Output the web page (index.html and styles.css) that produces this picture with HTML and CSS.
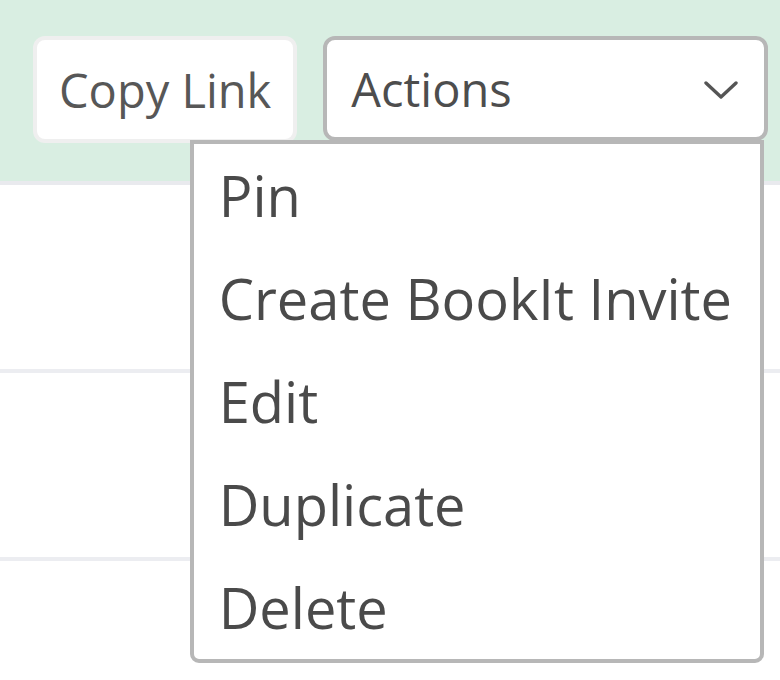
FILE: index.html
```html
<!DOCTYPE html>
<html lang="en">
<head>
    <meta charset="UTF-8">
    <meta name="viewport" content="width=device-width, initial-scale=1.0">
    <title>Event Actions</title>
    <link rel="stylesheet" href="styles.css">
</head>
<body>

    <!-- Toolbar with share + actions dropdown -->
    <header class="toolbar">
        <button class="btn copy-link">Copy Link</button>

        <div class="actions">
            <button class="btn actions-toggle">
                <span>Actions</span>
                <svg class="chevron" width="34" height="19" viewBox="0 0 34 19">
                    <path d="M2 2 L17 16 L32 2" fill="none" stroke="#555" stroke-width="3.4" stroke-linecap="round" stroke-linejoin="round"/>
                </svg>
            </button>

            <ul class="actions-menu">
                <li>Pin</li>
                <li>Create BookIt Invite</li>
                <li>Edit</li>
                <li>Duplicate</li>
                <li>Delete</li>
            </ul>
        </div>
    </header>

    <!-- List rows underneath -->
    <div class="rows">
        <div class="row"></div>
        <div class="row"></div>
        <div class="row last"></div>
    </div>

</body>
</html>
```

FILE: styles.css
```css
body {
    margin: 0;
    background: #fff;
    font-family: "Open Sans", "Liberation Sans", sans-serif;
    color: #4d4d4d;
}

/* Top bar */
.toolbar {
    position: relative;
    z-index: 5;
    display: flex;
    align-items: flex-start;
    gap: 26px;
    height: 185px;
    padding: 36px 12px 0 33px;
    box-sizing: border-box;
    background-color: #d9eee2;
    border-bottom: 4px solid #e9eaee;
}

.btn {
    display: flex;
    align-items: center;
    height: 106px;
    padding: 0 24px;
    box-sizing: border-box;
    background: #fff;
    border-radius: 12px;
    font-family: inherit;
    font-size: 47px;
    color: #4d4d4d;
    cursor: pointer;
}

.copy-link {
    height: 107px;
    padding: 0 22px;
    border: 4px solid #efefef;
    color: #575757;
}

.actions {
    position: relative;
    flex: 1;
}

.actions-toggle {
    width: 100%;
    height: 105px;
    justify-content: space-between;
    border: 4px solid #b7b7b7;
    padding: 0 26px 0 24px;
}

.chevron {
    margin-top: 4px;
}

/* Dropdown list */
.actions-menu {
    position: absolute;
    top: 100%;
    right: 4px;
    margin: -1px 0 0;
    padding: 0 28px 0 25px;
    list-style: none;
    background: #fff;
    border: 4px solid #b7b7b7;
    border-radius: 0 0 9px 9px;
    white-space: nowrap;
    z-index: 10;
}

.actions-menu li {
    font-size: 56px;
    line-height: 103px;
    color: #4a4a4a;
}

/* Rows below the toolbar */
.row {
    height: 184px;
    border-bottom: 4px solid #ecedf1;
}

.row.last {
    height: 119px;
    border-bottom: none;
}
```
